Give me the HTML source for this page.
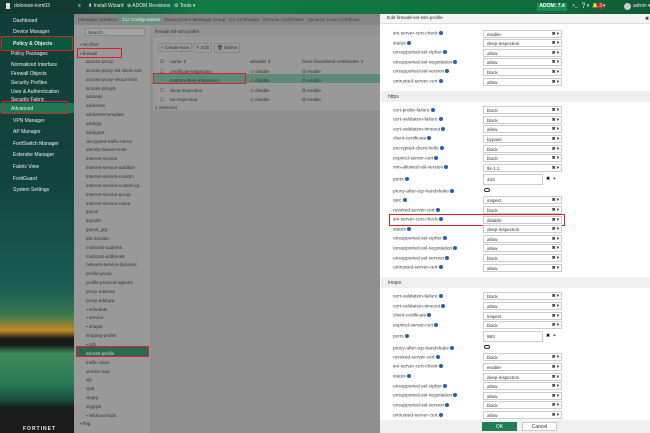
<!DOCTYPE html>
<html><head><meta charset="utf-8"><style>
*{margin:0;padding:0;box-sizing:border-box}
body{width:650px;height:433px;overflow:hidden;position:relative;font-family:"Liberation Sans",sans-serif;font-size:5px;background:#8f8f8f}
.a{position:absolute;white-space:nowrap}
#top{left:0;top:0;width:650px;height:14px;background:linear-gradient(90deg,#123a30 0,#123a30 74px,#127a45 200px,#11703f 500px,#0e5a37)}
#side{left:0;top:14px;width:74px;height:419px;background:linear-gradient(180deg,#113d38 0%,#12443f 40%,#1a5e55 66%,#3f7a50 72%,#c08a25 75.5%,#1a1a18 77.5%,#1a1a18 79%,#3d8a5a 81%,#2a7a55 88%,#1a5040 92%,#151a18 94%,#222 100%)}
.si{color:#eee;font-size:5px}
.tr{color:#333;font-size:4.6px}
.rp{left:380px;top:14px;width:270px;height:419px;background:#fff}
.lb{color:#444;font-size:4.8px;left:393px}
.lb i{display:inline-block;width:4px;height:4px;border-radius:50%;background:#2a5fb0;margin-left:1px;vertical-align:-0.5px}
.sel{left:483px;width:79px;height:8px;border:1px solid #ccc;background:#fff;font-size:4.6px;color:#333;padding:1px 0 0 3px}
.sel b{position:absolute;right:2px;top:0;font-size:4.5px;color:#333}
.sec{left:381px;width:269px;height:11px;background:#f0f0f0;color:#444;font-size:5px;padding:3px 0 0 7px}
.red{position:absolute;border:1.5px solid #d9212c}
</style></head><body>
<div class="a" id="top"></div>
<div class="a" style="left:6px;top:3px;width:4px;height:6px;background:#ddd"></div>
<div class="a si" style="left:14px;top:3px">dolorean-kvm03</div>
<div class="a si" style="left:78px;top:3px">≡</div>
<div class="a si" style="left:88px;top:3px">⬆ Install Wizard</div>
<div class="a si" style="left:127px;top:3px">⊕ ADOM Revisions</div>
<div class="a si" style="left:174px;top:3px">⚙ Tools ▾</div>
<div class="a" style="left:537px;top:3px;width:30px;height:8px;background:#1f8a55;color:#fff;font-size:5px;text-align:center;font-weight:bold">ADOM: 7.4</div>
<div class="a si" style="left:572px;top:3px">&gt;_ &nbsp;❔▾ &nbsp;🔔<span style="background:#d22;border-radius:2px;padding:0 1px">3</span>▾</div>
<div class="a" style="left:624px;top:3px;width:7px;height:7px;border-radius:50%;background:#ccc"></div>
<div class="a si" style="left:633px;top:3px">admin ▾</div>

<div class="a" id="side"></div>
<div class="a" style="left:0;top:36px;width:74px;height:14px;background:#0c5a3e"></div>
<div class="a" style="left:0;top:103px;width:74px;height:10px;background:#1b7a55"></div>
<div class="a" style="left:0;top:418px;width:74px;height:15px;background:#1a1a1a"></div>
<div class="a si" style="left:13px;top:18px">Dashboard</div>
<div class="a si" style="left:13px;top:29px">Device Manager</div>
<div class="a si" style="left:13px;top:41px;font-weight:bold">Policy &amp; Objects</div>
<div class="a si" style="left:11px;top:51px">Policy Packages</div>
<div class="a si" style="left:11px;top:62px">Normalized Interface</div>
<div class="a si" style="left:11px;top:71px">Firewall Objects</div>
<div class="a si" style="left:11px;top:80px">Security Profiles</div>
<div class="a si" style="left:11px;top:89px">User &amp; Authentication</div>
<div class="a si" style="left:11px;top:97px">Security Fabric</div>
<div class="a si" style="left:11px;top:106px">Advanced</div>
<div class="a si" style="left:13px;top:118px">VPN Manager</div>
<div class="a si" style="left:13px;top:129px">AP Manager</div>
<div class="a si" style="left:13px;top:141px">FortiSwitch Manager</div>
<div class="a si" style="left:13px;top:152px">Extender Manager</div>
<div class="a si" style="left:13px;top:164px">Fabric View</div>
<div class="a si" style="left:13px;top:176px">FortiGuard</div>
<div class="a si" style="left:13px;top:187px">System Settings</div>
<div class="a si" style="left:23px;top:426px;font-weight:bold;letter-spacing:1px">FORTINET</div>
<div class="red" style="left:1px;top:36px;width:72px;height:15px"></div>
<div class="red" style="left:2px;top:101px;width:66px;height:13px"></div>

<div class="a" style="left:74px;top:14px;width:306px;height:11px;background:#858585"></div>
<div class="a" style="left:118px;top:14px;width:44px;height:11px;background:#6f8f80"></div>
<div class="a tr" style="left:78px;top:17px;color:#444">Metadata Variables &nbsp;&nbsp;&nbsp;<span style="color:#eee">CLI Configurations</span> &nbsp;&nbsp;Replacement Message Group &nbsp;&nbsp;CA Certificates &nbsp;&nbsp;Remote Certificates &nbsp;&nbsp;Dynamic Local Certificate</div>
<div class="a" style="left:74px;top:25px;width:76px;height:408px;background:#999"></div>
<div class="a" style="left:85px;top:28px;width:60px;height:8px;background:#a5a5a5;border:1px solid #888"></div>
<div class="a tr" style="left:88px;top:30px">Search...</div>
<div class="a tr" style="left:80px;top:42px">▪ No filter</div>
<div class="a tr" style="left:80px;top:51px">▪ firewall</div>
<div class="red" style="left:77px;top:48px;width:45px;height:10px"></div>
<div class="a" style="left:76px;top:347px;width:72px;height:9px;background:#2b6a52"></div>
<div class="red" style="left:76px;top:346px;width:73px;height:11px"></div>
<div class="a tr" style="left:86px;top:58px;line-height:8.85px">access-proxy<br>access-proxy-ssl-client-cert<br>access-proxy-virtual-host<br>access-proxy6<br>address<br>address6<br>address6-template<br>addrgrp<br>addrgrp6<br>decrypted-traffic-mirror<br>identity-based-route<br>internet-service<br>internet-service-addition<br>internet-service-custom<br>internet-service-custom-gr...<br>internet-service-group<br>internet-service-name<br>ippool<br>ippool6<br>ippool_grp<br>ldb-monitor<br>multicast-address<br>multicast-address6<br>network-service-dynamic<br>profile-group<br>profile-protocol-options<br>proxy-address<br>proxy-addrgrp<br>▪ schedule<br>▪ service<br>▪ shaper<br>shaping-profile<br>▪ ssh<br><span style="color:#ddd">ssl-ssh-profile</span><br>traffic-class<br>vendor-mac<br>vip<br>vip6<br>vipgrp<br>vipgrp6<br>▪ wildcard-fqdn</div>
<div class="a tr" style="left:80px;top:421px">▪ ftsg</div>

<div class="a" style="left:150px;top:25px;width:230px;height:12px;background:#939393"></div>
<div class="a tr" style="left:155px;top:29px">firewall ssl-ssh-profile</div>
<div class="a" style="left:153px;top:37px;width:227px;height:73px;background:#999"></div>
<div class="a tr" style="left:158px;top:43px;border:1px solid #888;padding:1px 2px">+ Create New</div>
<div class="a tr" style="left:193px;top:43px;border:1px solid #888;padding:1px 2px">✎ Edit</div>
<div class="a tr" style="left:214px;top:43px;border:1px solid #888;padding:1px 2px">🗑 Delete</div>
<div class="a tr" style="left:160px;top:57px;line-height:9.5px">☑<br>☐<br>☑<br>☐<br>☐</div>
<div class="a" style="left:153px;top:74px;width:227px;height:9px;background:#5f8a78"></div>
<div class="red" style="left:153px;top:73px;width:93px;height:11px"></div>
<div class="a tr" style="left:170px;top:57px;line-height:9.5px">name ⇕<br>certificate-inspection<br>custom-deep-inspection<br>deep-inspection<br>no-inspection</div>
<div class="a tr" style="left:250px;top:57px;line-height:9.5px">allowlist ⇕<br><span style="color:#933">⊘</span> disable<br><span style="color:#933">⊘</span> disable<br><span style="color:#933">⊘</span> disable<br><span style="color:#933">⊘</span> disable</div>
<div class="a tr" style="left:302px;top:57px;line-height:9.5px">block blocklisted certificates ⇕<br><span style="color:#363">✪</span> enable<br><span style="color:#363">✪</span> enable<br><span style="color:#363">✪</span> enable<br><span style="color:#363">✪</span> enable</div>
<div class="a tr" style="left:155px;top:105px">1 Selected</div>

<div class="a rp"></div>
<div class="a" style="left:380px;top:14px;width:270px;height:10px;background:#f4f4f4;border-bottom:1px solid #ddd"></div>
<div class="a" style="left:387px;top:16px;font-size:4.8px;color:#333">Edit firewall-ssl-ssh-profile</div>
<div class="a" style="left:645px;top:16px;font-size:5px;color:#333">✖</div>

<div class="a lb" style="top:31px">sni-server-cert-check<i></i></div><div class="a sel" style="top:30px">enable<b>✖ ▾</b></div>
<div class="a lb" style="top:41px">status<i></i></div><div class="a sel" style="top:39px">deep-inspection<b>✖ ▾</b></div>
<div class="a lb" style="top:50px">unsupported-ssl-cipher<i></i></div><div class="a sel" style="top:49px">allow<b>✖ ▾</b></div>
<div class="a lb" style="top:60px">unsupported-ssl-negotiation<i></i></div><div class="a sel" style="top:58px">allow<b>✖ ▾</b></div>
<div class="a lb" style="top:69px">unsupported-ssl-version<i></i></div><div class="a sel" style="top:68px">block<b>✖ ▾</b></div>
<div class="a lb" style="top:79px">untrusted-server-cert<i></i></div><div class="a sel" style="top:78px">allow<b>✖ ▾</b></div>
<div class="a sec" style="top:91px">https</div>
<div class="a lb" style="top:108px">cert-probe-failure<i></i></div><div class="a sel" style="top:106px">block<b>✖ ▾</b></div>
<div class="a lb" style="top:117px">cert-validation-failure<i></i></div><div class="a sel" style="top:116px">block<b>✖ ▾</b></div>
<div class="a lb" style="top:127px">cert-validation-timeout<i></i></div><div class="a sel" style="top:125px">allow<b>✖ ▾</b></div>
<div class="a lb" style="top:136px">client-certificate<i></i></div><div class="a sel" style="top:135px">bypass<b>✖ ▾</b></div>
<div class="a lb" style="top:146px">encrypted-client-hello<i></i></div><div class="a sel" style="top:145px">block<b>✖ ▾</b></div>
<div class="a lb" style="top:156px">expired-server-cert<i></i></div><div class="a sel" style="top:154px">block<b>✖ ▾</b></div>
<div class="a lb" style="top:165px">min-allowed-ssl-version<i></i></div><div class="a sel" style="top:164px">tls-1.1<b>✖ ▾</b></div>
<div class="a lb" style="top:177px">ports<i></i></div><div class="a sel" style="top:174px;width:60px;height:11px;padding-top:2px">443</div>
<div class="a" style="left:546px;top:176px;font-size:5px">✖ &nbsp;+</div>
<div class="a lb" style="top:189px">proxy-after-tcp-handshake<i></i></div>
<div class="a" style="left:484px;top:188px;width:6px;height:4px;border-radius:2px;border:1px solid #333"></div>
<div class="a lb" style="top:198px">quic<i></i></div><div class="a sel" style="top:196px">inspect<b>✖ ▾</b></div>
<div class="a lb" style="top:208px">revoked-server-cert<i></i></div><div class="a sel" style="top:206px">block<b>✖ ▾</b></div>
<div class="a lb" style="top:217px">sni-server-cert-check<i></i></div><div class="a sel" style="top:216px">disable<b>✖ ▾</b></div>
<div class="red" style="left:389px;top:214px;width:176px;height:12px"></div>
<div class="a lb" style="top:227px">status<i></i></div><div class="a sel" style="top:225px">deep-inspection<b>✖ ▾</b></div>
<div class="a lb" style="top:236px">unsupported-ssl-cipher<i></i></div><div class="a sel" style="top:235px">allow<b>✖ ▾</b></div>
<div class="a lb" style="top:246px">unsupported-ssl-negotiation<i></i></div><div class="a sel" style="top:244px">allow<b>✖ ▾</b></div>
<div class="a lb" style="top:256px">unsupported-ssl-version<i></i></div><div class="a sel" style="top:254px">block<b>✖ ▾</b></div>
<div class="a lb" style="top:265px">untrusted-server-cert<i></i></div><div class="a sel" style="top:264px">allow<b>✖ ▾</b></div>
<div class="a sec" style="top:277px">imaps</div>
<div class="a lb" style="top:294px">cert-validation-failure<i></i></div><div class="a sel" style="top:292px">block<b>✖ ▾</b></div>
<div class="a lb" style="top:304px">cert-validation-timeout<i></i></div><div class="a sel" style="top:302px">allow<b>✖ ▾</b></div>
<div class="a lb" style="top:313px">client-certificate<i></i></div><div class="a sel" style="top:312px">inspect<b>✖ ▾</b></div>
<div class="a lb" style="top:323px">expired-server-cert<i></i></div><div class="a sel" style="top:321px">block<b>✖ ▾</b></div>
<div class="a lb" style="top:334px">ports<i></i></div><div class="a sel" style="top:331px;width:60px;height:11px;padding-top:2px">993</div>
<div class="a" style="left:546px;top:333px;font-size:5px">✖ &nbsp;+</div>
<div class="a lb" style="top:346px">proxy-after-tcp-handshake<i></i></div>
<div class="a" style="left:484px;top:345px;width:6px;height:4px;border-radius:2px;border:1px solid #333"></div>
<div class="a lb" style="top:355px">revoked-server-cert<i></i></div><div class="a sel" style="top:353px">block<b>✖ ▾</b></div>
<div class="a lb" style="top:364px">sni-server-cert-check<i></i></div><div class="a sel" style="top:363px">enable<b>✖ ▾</b></div>
<div class="a lb" style="top:374px">status<i></i></div><div class="a sel" style="top:373px">deep-inspection<b>✖ ▾</b></div>
<div class="a lb" style="top:384px">unsupported-ssl-cipher<i></i></div><div class="a sel" style="top:382px">allow<b>✖ ▾</b></div>
<div class="a lb" style="top:393px">unsupported-ssl-negotiation<i></i></div><div class="a sel" style="top:392px">allow<b>✖ ▾</b></div>
<div class="a lb" style="top:403px">unsupported-ssl-version<i></i></div><div class="a sel" style="top:401px">block<b>✖ ▾</b></div>
<div class="a lb" style="top:413px">untrusted-server-cert<i></i></div><div class="a sel" style="top:411px">allow<b>✖ ▾</b></div>
<div class="a" style="left:380px;top:420px;width:270px;height:13px;background:#f0f0f0"></div>
<div class="a" style="left:482px;top:422px;width:35px;height:9px;background:#1e7d55;color:#fff;font-size:5px;text-align:center;padding-top:2px">OK</div>
<div class="a" style="left:522px;top:422px;width:35px;height:9px;background:#fff;border:1px solid #ccc;color:#333;font-size:5px;text-align:center;padding-top:1px">Cancel</div>
</body></html>
